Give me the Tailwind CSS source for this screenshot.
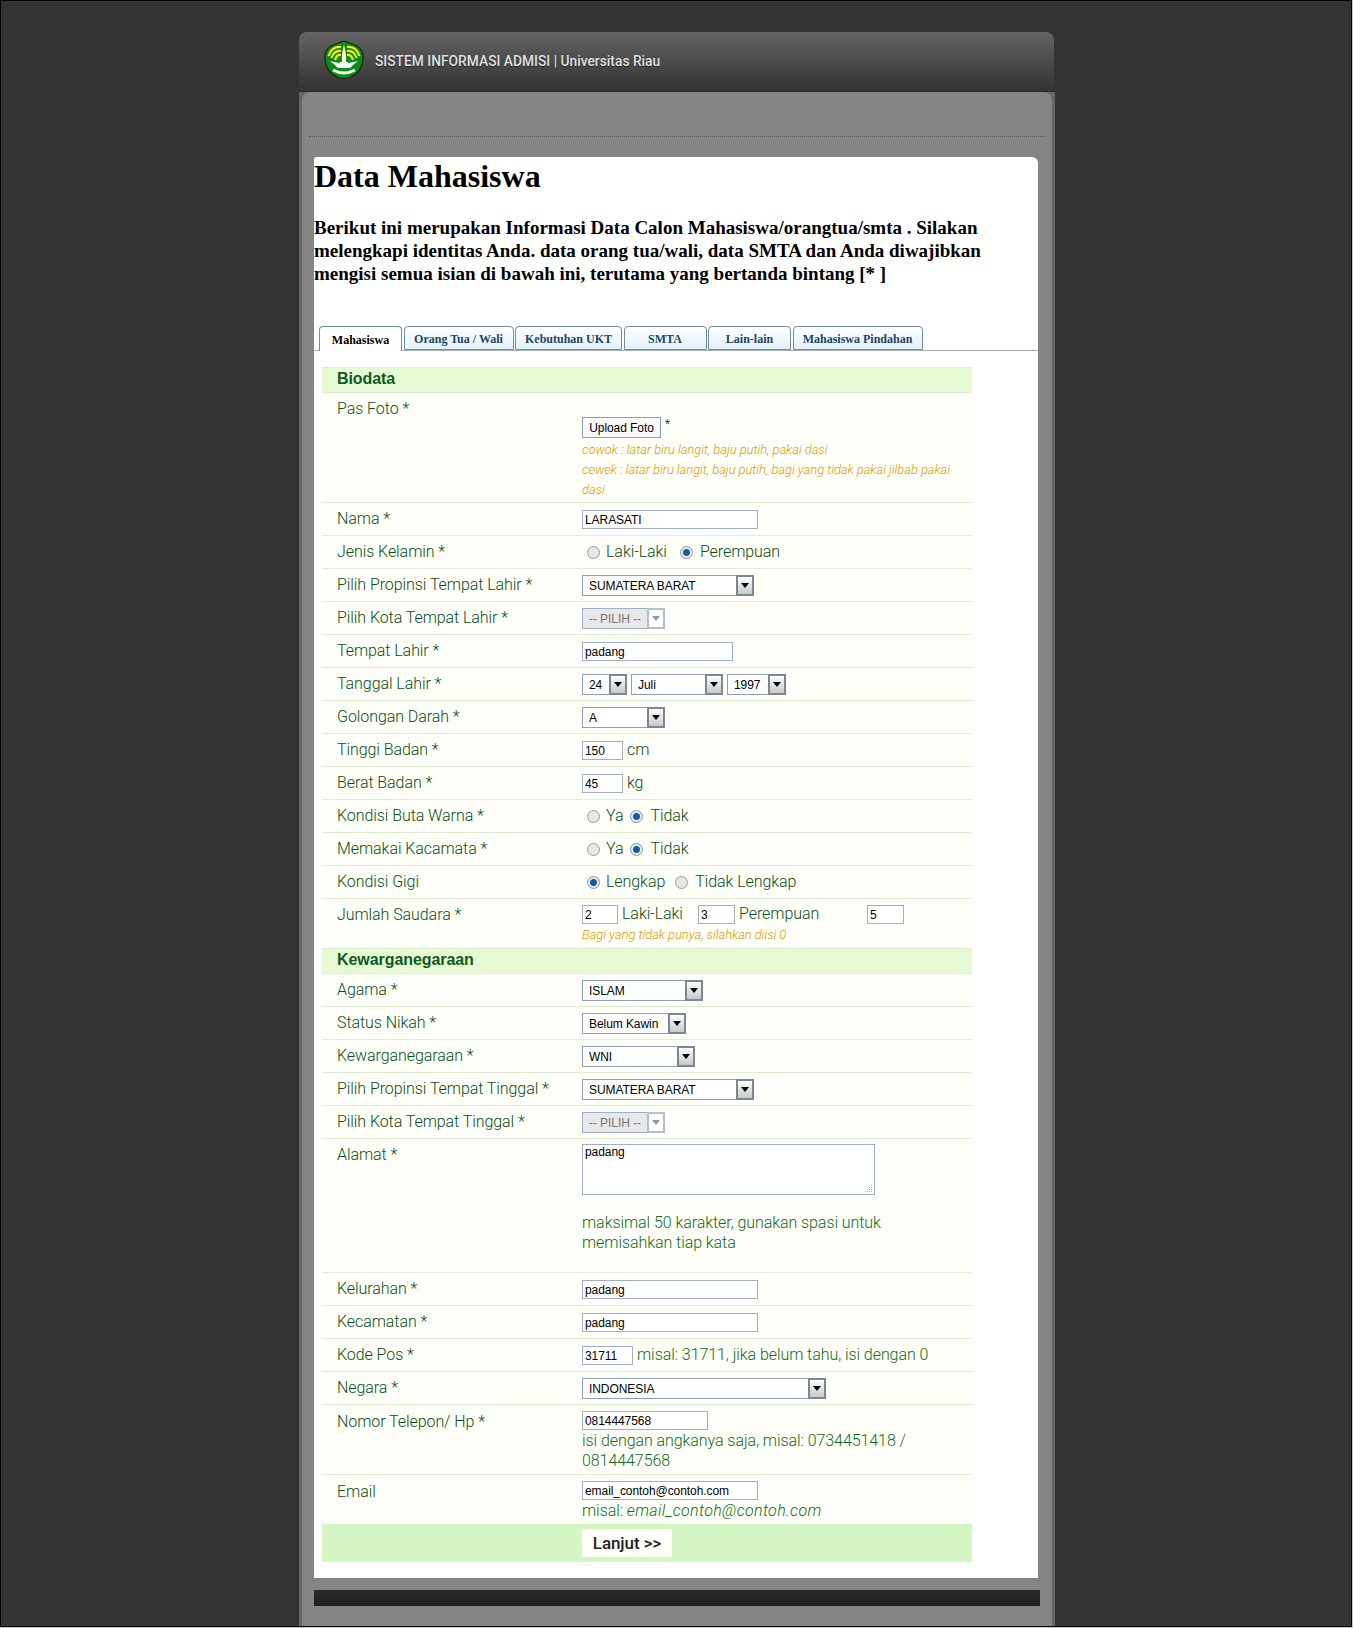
<!DOCTYPE html>
<html lang="en">
<head>
    <meta charset="UTF-8">
    <meta name="viewport" content="width=device-width, initial-scale=1.0">
    <title>Data Mahasiswa</title>
    <script src="https://cdn.jsdelivr.net/npm/@tailwindcss/browser@4"></script>
</head>
<body class="bg-[#c8c8c8]">
<div class="h-[1627px] w-[1352px] overflow-hidden border border-black bg-[#333333] font-['Roboto',sans-serif]">
    <div class="ml-[298px] w-[756px] pt-[31px]">
        <!-- header -->
        <div class="flex h-[60px] w-[755px] items-center rounded-t-[8px] border-b border-[#2c2c2c] bg-gradient-to-b from-[#646464] to-[#333333] pl-[25px]">
            <svg width="40" height="40" viewBox="0 0 40 40" class="mb-[3px] shrink-0">
                <path d="M20 1 L33 6 Q39 10 39 17 Q39 27 32 34 Q26 38 20 39 Q14 38 8 34 Q1 27 1 17 Q1 10 7 6 Z" fill="#0f8a1c" stroke="#10240f" stroke-width="1.2"/>
                <path d="M17 7 Q8 6 4.5 16 M17 11 Q10 10 7.5 18 M17 15 Q13 14 11 20" fill="none" stroke="#f4e81c" stroke-width="2.2"/>
                <path d="M23 7 Q32 6 35.5 16 M23 11 Q30 10 32.5 18 M23 15 Q27 14 29 20" fill="none" stroke="#f4e81c" stroke-width="2.2"/>
                <path d="M20 5 C21.5 10 22.5 16 22 22 L18 22 C17.500 16 18.500 10 20 5 Z" fill="#fdfbd0"/>
                <path d="M6 21 L15 23 L17 22 L23 22 L25 23 L34 21 L29 25 L26 28 L14 28 L11 25 Z" fill="#ffffff"/>
                <path d="M9 30 Q20 36 31 30" fill="none" stroke="#f0f8e8" stroke-width="3"/>
            </svg>
            <span class="ml-[11px] text-[13.8px] font-medium text-[#e0e0e0] [text-shadow:0_1px_1px_#222]">SISTEM INFORMASI ADMISI | Universitas Riau</span>
        </div>

        <!-- main column -->
        <div class="h-[1540px] bg-[#666666] px-[3px]">
            <div class="h-full rounded-t-[8px] bg-[#858585] pt-[44px]">
                <div class="mx-[7px] border-t border-dotted border-[#555555]"></div>
                <div class="mt-[20px] ml-[12px] w-[724px] rounded-tr-[6px] rounded-tl-[3px] bg-white pt-[1px] pb-[16px]">
                    <h1 class="font-['Liberation_Serif',serif] text-[32px] leading-[37px] font-bold text-black">Data Mahasiswa</h1>
                    <p class="mt-[21px] w-[700px] font-['Liberation_Serif',serif] text-[19px] leading-[23px] font-bold text-black">Berikut ini merupakan Informasi Data Calon Mahasiswa/orangtua/smta . Silakan melengkapi identitas Anda. data orang tua/wali, data SMTA dan Anda diwajibkan mengisi semua isian di bawah ini, terutama yang bertanda bintang [* ]</p>

                    <!-- tabs -->
                    <div class="mt-[41px] flex h-[25px] gap-[1.5px] border-b border-[#a5adb5] pl-[5px] font-['Liberation_Serif',serif] text-[12px] font-bold text-[#1d4568]">
                        <div class="flex h-[25px] w-[83px] items-center justify-center rounded-t-[4px] border border-b-0 border-[#6f8ca3] bg-white pt-[2px] text-black">Mahasiswa</div>
                        <div class="flex h-[24px] w-[110px] items-center justify-center rounded-t-[4px] border border-[#6f8ca3] bg-gradient-to-b from-white to-[#e3f1fa] pt-[1px]">Orang Tua / Wali</div>
                        <div class="flex h-[24px] w-[107px] items-center justify-center rounded-t-[4px] border border-[#6f8ca3] bg-gradient-to-b from-white to-[#e3f1fa] pt-[1px]">Kebutuhan UKT</div>
                        <div class="flex h-[24px] w-[83px] items-center justify-center rounded-t-[4px] border border-[#6f8ca3] bg-gradient-to-b from-white to-[#e3f1fa] pt-[1px]">SMTA</div>
                        <div class="flex h-[24px] w-[83px] items-center justify-center rounded-t-[4px] border border-[#6f8ca3] bg-gradient-to-b from-white to-[#e3f1fa] pt-[1px]">Lain-lain</div>
                        <div class="flex h-[24px] w-[130px] items-center justify-center rounded-t-[4px] border border-[#6f8ca3] bg-gradient-to-b from-white to-[#e3f1fa] pt-[1px]">Mahasiswa Pindahan</div>
                    </div>

                    <!-- form -->
                    <div class="mt-[16px] ml-[8px] w-[650px] text-[16px] leading-[20px] font-light tracking-[-0.07px] text-[#0c4d20]">
                        <div class="flex h-[26px] items-center border-y border-[#dcefd0] bg-[#e6fbd4] pb-[2px] pl-[15px] font-['Liberation_Sans',sans-serif] font-bold text-[#0f5a22]">Biodata</div>

                        <div class="flex h-[110px] border-b border-[#dfeed3] bg-[#fdfff8]">
                            <div class="w-[260px] shrink-0 pl-[15px] pt-[6px]">Pas Foto *</div>
                            <div class="pt-[24px]">
                                <div class="flex items-start">
                                    <button class="h-[21px] w-[79px] border border-[#8f9fb3] bg-[#f9f9f9] font-['Liberation_Sans',sans-serif] text-[12px] font-normal text-black">Upload Foto</button>
                                    <span class="ml-[4px] text-[12px] leading-[14px] text-black">*</span>
                                </div>
                                <p class="mt-[2px] w-[380px] text-[13px] leading-[20px] text-[#e09a00] italic">cowok : latar biru langit, baju putih, pakai dasi<br>cewek : latar biru langit, baju putih, bagi yang tidak pakai jilbab pakai dasi</p>
                            </div>
                        </div>

                        <div class="flex h-[33px] border-b border-[#dfeed3] bg-[#fdfff8]">
                            <div class="w-[260px] shrink-0 pl-[15px] pt-[6px]">Nama *</div>
                            <div class="pt-[7px]"><input type="text" value="LARASATI" class="block h-[19px] w-[176px] border border-[#9fb0c5] bg-white px-[2px] font-['Liberation_Sans',sans-serif] text-[12px] font-normal text-black"></div>
                        </div>

                        <div class="flex h-[33px] border-b border-[#dfeed3] bg-[#fdfff8]">
                            <div class="w-[260px] shrink-0 pl-[15px] pt-[6px]">Jenis Kelamin *</div>
                            <div class="flex items-center pl-[5px]">
                                <input type="radio" name="jk" class="h-[13px] w-[13px] appearance-none rounded-full border border-[#9a9a9a] bg-[#e6e6e6]"><span class="ml-[6px]">Laki-Laki</span>
                                <input type="radio" name="jk" checked class="ml-[13px] h-[13px] w-[13px] appearance-none rounded-full border border-[#8a94a0] bg-[radial-gradient(circle,#1a5a9c_0,#1a5a9c_3px,#e4e9ef_4px)]"><span class="ml-[7px]">Perempuan</span>
                            </div>
                        </div>

                        <div class="flex h-[33px] border-b border-[#dfeed3] bg-[#fdfff8]">
                            <div class="w-[260px] shrink-0 pl-[15px] pt-[6px]">Pilih Propinsi Tempat Lahir *</div>
                            <div class="pt-[6px]">
                                <span class="relative block h-[21px] w-[172px]"><select class="h-full w-full appearance-none border border-[#8f9fb3] bg-white pb-[4px] pl-[6px] font-['Liberation_Sans',sans-serif] text-[12px] font-normal text-black"><option>SUMATERA BARAT</option></select><span class="absolute top-0 right-0 flex h-[21px] w-[18px] items-center justify-center border-2 border-[#7c8794] bg-gradient-to-b from-white to-[#c9c9c9]"><span class="border-x-[4px] border-t-[5px] border-x-transparent border-t-black"></span></span></span>
                            </div>
                        </div>

                        <div class="flex h-[33px] border-b border-[#dfeed3] bg-[#fdfff8]">
                            <div class="w-[260px] shrink-0 pl-[15px] pt-[6px]">Pilih Kota Tempat Lahir *</div>
                            <div class="pt-[6px]">
                                <span class="relative block h-[21px] w-[83px]"><select disabled class="h-full w-full appearance-none border border-[#9fb0c5] bg-[#e8e8e8] pb-[4px] pl-[6px] font-['Liberation_Sans',sans-serif] text-[12px] font-normal text-[#777777]"><option>-- PILIH --</option></select><span class="absolute top-0 right-0 flex h-[21px] w-[18px] items-center justify-center border-2 border-[#b5bfca] bg-white"><span class="border-x-[4px] border-t-[5px] border-x-transparent border-t-[#999999]"></span></span></span>
                            </div>
                        </div>

                        <div class="flex h-[33px] border-b border-[#dfeed3] bg-[#fdfff8]">
                            <div class="w-[260px] shrink-0 pl-[15px] pt-[6px]">Tempat Lahir *</div>
                            <div class="pt-[7px]"><input type="text" value="padang" class="block h-[19px] w-[151px] border border-[#9fb0c5] bg-white px-[2px] font-['Liberation_Sans',sans-serif] text-[12px] font-normal text-black"></div>
                        </div>

                        <div class="flex h-[33px] border-b border-[#dfeed3] bg-[#fdfff8]">
                            <div class="w-[260px] shrink-0 pl-[15px] pt-[6px]">Tanggal Lahir *</div>
                            <div class="flex gap-[4px] pt-[6px]">
                                <span class="relative block h-[21px] w-[45px]"><select class="h-full w-full appearance-none border border-[#8f9fb3] bg-white pb-[4px] pl-[6px] font-['Liberation_Sans',sans-serif] text-[12px] font-normal text-black"><option>24</option></select><span class="absolute top-0 right-0 flex h-[21px] w-[18px] items-center justify-center border-2 border-[#7c8794] bg-gradient-to-b from-white to-[#c9c9c9]"><span class="border-x-[4px] border-t-[5px] border-x-transparent border-t-black"></span></span></span>
                                <span class="relative block h-[21px] w-[92px]"><select class="h-full w-full appearance-none border border-[#8f9fb3] bg-white pb-[4px] pl-[6px] font-['Liberation_Sans',sans-serif] text-[12px] font-normal text-black"><option>Juli</option></select><span class="absolute top-0 right-0 flex h-[21px] w-[18px] items-center justify-center border-2 border-[#7c8794] bg-gradient-to-b from-white to-[#c9c9c9]"><span class="border-x-[4px] border-t-[5px] border-x-transparent border-t-black"></span></span></span>
                                <span class="relative block h-[21px] w-[59px]"><select class="h-full w-full appearance-none border border-[#8f9fb3] bg-white pb-[4px] pl-[6px] font-['Liberation_Sans',sans-serif] text-[12px] font-normal text-black"><option>1997</option></select><span class="absolute top-0 right-0 flex h-[21px] w-[18px] items-center justify-center border-2 border-[#7c8794] bg-gradient-to-b from-white to-[#c9c9c9]"><span class="border-x-[4px] border-t-[5px] border-x-transparent border-t-black"></span></span></span>
                            </div>
                        </div>

                        <div class="flex h-[33px] border-b border-[#dfeed3] bg-[#fdfff8]">
                            <div class="w-[260px] shrink-0 pl-[15px] pt-[6px]">Golongan Darah *</div>
                            <div class="pt-[6px]">
                                <span class="relative block h-[21px] w-[83px]"><select class="h-full w-full appearance-none border border-[#8f9fb3] bg-white pb-[4px] pl-[6px] font-['Liberation_Sans',sans-serif] text-[12px] font-normal text-black"><option>A</option></select><span class="absolute top-0 right-0 flex h-[21px] w-[18px] items-center justify-center border-2 border-[#7c8794] bg-gradient-to-b from-white to-[#c9c9c9]"><span class="border-x-[4px] border-t-[5px] border-x-transparent border-t-black"></span></span></span>
                            </div>
                        </div>

                        <div class="flex h-[33px] border-b border-[#dfeed3] bg-[#fdfff8]">
                            <div class="w-[260px] shrink-0 pl-[15px] pt-[6px]">Tinggi Badan *</div>
                            <div class="flex items-start pt-[7px]"><input type="text" value="150" class="block h-[19px] w-[41px] border border-[#9fb0c5] bg-white px-[2px] font-['Liberation_Sans',sans-serif] text-[12px] font-normal text-black"><span class="ml-[4px] leading-[17px]">cm</span></div>
                        </div>

                        <div class="flex h-[33px] border-b border-[#dfeed3] bg-[#fdfff8]">
                            <div class="w-[260px] shrink-0 pl-[15px] pt-[6px]">Berat Badan *</div>
                            <div class="flex items-start pt-[7px]"><input type="text" value="45" class="block h-[19px] w-[41px] border border-[#9fb0c5] bg-white px-[2px] font-['Liberation_Sans',sans-serif] text-[12px] font-normal text-black"><span class="ml-[4px] leading-[17px]">kg</span></div>
                        </div>

                        <div class="flex h-[33px] border-b border-[#dfeed3] bg-[#fdfff8]">
                            <div class="w-[260px] shrink-0 pl-[15px] pt-[6px]">Kondisi Buta Warna *</div>
                            <div class="flex items-center pl-[5px]">
                                <input type="radio" name="bw" class="h-[13px] w-[13px] appearance-none rounded-full border border-[#9a9a9a] bg-[#e6e6e6]"><span class="ml-[6px]">Ya</span>
                                <input type="radio" name="bw" checked class="ml-[7px] h-[13px] w-[13px] appearance-none rounded-full border border-[#8a94a0] bg-[radial-gradient(circle,#1a5a9c_0,#1a5a9c_3px,#e4e9ef_4px)]"><span class="ml-[7px]">Tidak</span>
                            </div>
                        </div>

                        <div class="flex h-[33px] border-b border-[#dfeed3] bg-[#fdfff8]">
                            <div class="w-[260px] shrink-0 pl-[15px] pt-[6px]">Memakai Kacamata *</div>
                            <div class="flex items-center pl-[5px]">
                                <input type="radio" name="kc" class="h-[13px] w-[13px] appearance-none rounded-full border border-[#9a9a9a] bg-[#e6e6e6]"><span class="ml-[6px]">Ya</span>
                                <input type="radio" name="kc" checked class="ml-[7px] h-[13px] w-[13px] appearance-none rounded-full border border-[#8a94a0] bg-[radial-gradient(circle,#1a5a9c_0,#1a5a9c_3px,#e4e9ef_4px)]"><span class="ml-[7px]">Tidak</span>
                            </div>
                        </div>

                        <div class="flex h-[33px] border-b border-[#dfeed3] bg-[#fdfff8]">
                            <div class="w-[260px] shrink-0 pl-[15px] pt-[6px]">Kondisi Gigi</div>
                            <div class="flex items-center pl-[5px]">
                                <input type="radio" name="gg" checked class="h-[13px] w-[13px] appearance-none rounded-full border border-[#8a94a0] bg-[radial-gradient(circle,#1a5a9c_0,#1a5a9c_3px,#e4e9ef_4px)]"><span class="ml-[6px]">Lengkap</span>
                                <input type="radio" name="gg" class="ml-[10px] h-[13px] w-[13px] appearance-none rounded-full border border-[#9a9a9a] bg-[#e6e6e6]"><span class="ml-[7px]">Tidak Lengkap</span>
                            </div>
                        </div>

                        <div class="flex h-[49px] bg-[#fdfff8]">
                            <div class="w-[260px] shrink-0 pl-[15px] pt-[6px]">Jumlah Saudara *</div>
                            <div class="pt-[6px]">
                                <div class="flex items-start">
                                    <input type="text" value="2" class="block h-[19px] w-[36px] border border-[#9fb0c5] bg-white px-[2px] font-['Liberation_Sans',sans-serif] text-[12px] font-normal text-black"><span class="ml-[4px] w-[76px] leading-[17px]">Laki-Laki</span>
                                    <input type="text" value="3" class="block h-[19px] w-[37px] border border-[#9fb0c5] bg-white px-[2px] font-['Liberation_Sans',sans-serif] text-[12px] font-normal text-black"><span class="ml-[4px] w-[128px] leading-[17px]">Perempuan</span>
                                    <input type="text" value="5" class="block h-[19px] w-[37px] border border-[#9fb0c5] bg-white px-[2px] font-['Liberation_Sans',sans-serif] text-[12px] font-normal text-black">
                                </div>
                                <p class="mt-[1px] text-[13px] leading-[20px] text-[#e09a00] italic">Bagi yang tidak punya, silahkan diisi 0</p>
                            </div>
                        </div>

                        <div class="flex h-[26px] items-center border-y border-[#dcefd0] bg-[#e6fbd4] pb-[2px] pl-[15px] font-['Liberation_Sans',sans-serif] font-bold text-[#0f5a22]">Kewarganegaraan</div>

                        <div class="flex h-[33px] border-b border-[#dfeed3] bg-[#fdfff8]">
                            <div class="w-[260px] shrink-0 pl-[15px] pt-[6px]">Agama *</div>
                            <div class="pt-[6px]">
                                <span class="relative block h-[21px] w-[121px]"><select class="h-full w-full appearance-none border border-[#8f9fb3] bg-white pb-[4px] pl-[6px] font-['Liberation_Sans',sans-serif] text-[12px] font-normal text-black"><option>ISLAM</option></select><span class="absolute top-0 right-0 flex h-[21px] w-[18px] items-center justify-center border-2 border-[#7c8794] bg-gradient-to-b from-white to-[#c9c9c9]"><span class="border-x-[4px] border-t-[5px] border-x-transparent border-t-black"></span></span></span>
                            </div>
                        </div>

                        <div class="flex h-[33px] border-b border-[#dfeed3] bg-[#fdfff8]">
                            <div class="w-[260px] shrink-0 pl-[15px] pt-[6px]">Status Nikah *</div>
                            <div class="pt-[6px]">
                                <span class="relative block h-[21px] w-[104px]"><select class="h-full w-full appearance-none border border-[#8f9fb3] bg-white pb-[4px] pl-[6px] font-['Liberation_Sans',sans-serif] text-[12px] font-normal text-black"><option>Belum Kawin</option></select><span class="absolute top-0 right-0 flex h-[21px] w-[18px] items-center justify-center border-2 border-[#7c8794] bg-gradient-to-b from-white to-[#c9c9c9]"><span class="border-x-[4px] border-t-[5px] border-x-transparent border-t-black"></span></span></span>
                            </div>
                        </div>

                        <div class="flex h-[33px] border-b border-[#dfeed3] bg-[#fdfff8]">
                            <div class="w-[260px] shrink-0 pl-[15px] pt-[6px]">Kewarganegaraan *</div>
                            <div class="pt-[6px]">
                                <span class="relative block h-[21px] w-[113px]"><select class="h-full w-full appearance-none border border-[#8f9fb3] bg-white pb-[4px] pl-[6px] font-['Liberation_Sans',sans-serif] text-[12px] font-normal text-black"><option>WNI</option></select><span class="absolute top-0 right-0 flex h-[21px] w-[18px] items-center justify-center border-2 border-[#7c8794] bg-gradient-to-b from-white to-[#c9c9c9]"><span class="border-x-[4px] border-t-[5px] border-x-transparent border-t-black"></span></span></span>
                            </div>
                        </div>

                        <div class="flex h-[33px] border-b border-[#dfeed3] bg-[#fdfff8]">
                            <div class="w-[260px] shrink-0 pl-[15px] pt-[6px]">Pilih Propinsi Tempat Tinggal *</div>
                            <div class="pt-[6px]">
                                <span class="relative block h-[21px] w-[172px]"><select class="h-full w-full appearance-none border border-[#8f9fb3] bg-white pb-[4px] pl-[6px] font-['Liberation_Sans',sans-serif] text-[12px] font-normal text-black"><option>SUMATERA BARAT</option></select><span class="absolute top-0 right-0 flex h-[21px] w-[18px] items-center justify-center border-2 border-[#7c8794] bg-gradient-to-b from-white to-[#c9c9c9]"><span class="border-x-[4px] border-t-[5px] border-x-transparent border-t-black"></span></span></span>
                            </div>
                        </div>

                        <div class="flex h-[33px] border-b border-[#dfeed3] bg-[#fdfff8]">
                            <div class="w-[260px] shrink-0 pl-[15px] pt-[6px]">Pilih Kota Tempat Tinggal *</div>
                            <div class="pt-[6px]">
                                <span class="relative block h-[21px] w-[83px]"><select disabled class="h-full w-full appearance-none border border-[#9fb0c5] bg-[#e8e8e8] pb-[4px] pl-[6px] font-['Liberation_Sans',sans-serif] text-[12px] font-normal text-[#777777]"><option>-- PILIH --</option></select><span class="absolute top-0 right-0 flex h-[21px] w-[18px] items-center justify-center border-2 border-[#b5bfca] bg-white"><span class="border-x-[4px] border-t-[5px] border-x-transparent border-t-[#999999]"></span></span></span>
                            </div>
                        </div>

                        <div class="flex h-[134px] border-b border-[#dfeed3] bg-[#fdfff8]">
                            <div class="w-[260px] shrink-0 pl-[15px] pt-[6px]">Alamat *</div>
                            <div class="pt-[5px]">
                                <span class="relative block h-[51px] w-[293px]">
                                    <textarea class="block h-full w-full resize-none border border-[#9fb0c5] bg-white px-[2px] font-['Liberation_Sans',sans-serif] text-[12px] leading-[14px] font-normal text-black">padang</textarea>
                                    <svg width="8" height="8" viewBox="0 0 8 8" class="absolute right-[2px] bottom-[2px]"><path d="M6 0h1v1H6zM4 2h1v1H4zM6 2h1v1H6zM2 4h1v1H2zM4 4h1v1H4zM6 4h1v1H6zM0 6h1v1H0zM2 6h1v1H2zM4 6h1v1H4zM6 6h1v1H6z" fill="#b0b8b0"/></svg>
                                </span>
                                <p class="mt-[18px] w-[320px] text-[#146a1a]">maksimal 50 karakter, gunakan spasi untuk memisahkan tiap kata</p>
                            </div>
                        </div>

                        <div class="flex h-[33px] border-b border-[#dfeed3] bg-[#fdfff8]">
                            <div class="w-[260px] shrink-0 pl-[15px] pt-[6px]">Kelurahan *</div>
                            <div class="pt-[7px]"><input type="text" value="padang" class="block h-[19px] w-[176px] border border-[#9fb0c5] bg-white px-[2px] font-['Liberation_Sans',sans-serif] text-[12px] font-normal text-black"></div>
                        </div>

                        <div class="flex h-[33px] border-b border-[#dfeed3] bg-[#fdfff8]">
                            <div class="w-[260px] shrink-0 pl-[15px] pt-[6px]">Kecamatan *</div>
                            <div class="pt-[7px]"><input type="text" value="padang" class="block h-[19px] w-[176px] border border-[#9fb0c5] bg-white px-[2px] font-['Liberation_Sans',sans-serif] text-[12px] font-normal text-black"></div>
                        </div>

                        <div class="flex h-[33px] border-b border-[#dfeed3] bg-[#fdfff8]">
                            <div class="w-[260px] shrink-0 pl-[15px] pt-[6px]">Kode Pos *</div>
                            <div class="flex items-start pt-[7px]"><input type="text" value="31711" class="block h-[19px] w-[51px] border border-[#9fb0c5] bg-white px-[2px] font-['Liberation_Sans',sans-serif] text-[12px] font-normal text-black"><span class="ml-[4px] leading-[17px] text-[#146a1a]">misal: 31711, jika belum tahu, isi dengan 0</span></div>
                        </div>

                        <div class="flex h-[33px] border-b border-[#dfeed3] bg-[#fdfff8]">
                            <div class="w-[260px] shrink-0 pl-[15px] pt-[6px]">Negara *</div>
                            <div class="pt-[6px]">
                                <span class="relative block h-[21px] w-[244px]"><select class="h-full w-full appearance-none border border-[#8f9fb3] bg-white pb-[4px] pl-[6px] font-['Liberation_Sans',sans-serif] text-[12px] font-normal text-black"><option>INDONESIA</option></select><span class="absolute top-0 right-0 flex h-[21px] w-[18px] items-center justify-center border-2 border-[#7c8794] bg-gradient-to-b from-white to-[#c9c9c9]"><span class="border-x-[4px] border-t-[5px] border-x-transparent border-t-black"></span></span></span>
                            </div>
                        </div>

                        <div class="flex h-[70px] border-b border-[#dfeed3] bg-[#fdfff8]">
                            <div class="w-[260px] shrink-0 pl-[15px] pt-[7px]">Nomor Telepon/ Hp *</div>
                            <div class="pt-[6px]">
                                <input type="text" value="0814447568" class="block h-[19px] w-[126px] border border-[#9fb0c5] bg-white px-[2px] font-['Liberation_Sans',sans-serif] text-[12px] font-normal text-black">
                                <p class="mt-[1px] w-[340px] text-[#146a1a]">isi dengan angkanya saja, misal: 0734451418 / 0814447568</p>
                            </div>
                        </div>

                        <div class="flex h-[49px] bg-[#fdfff8]">
                            <div class="w-[260px] shrink-0 pl-[15px] pt-[7px]">Email</div>
                            <div class="pt-[6px]">
                                <input type="text" value="email_contoh@contoh.com" class="block h-[19px] w-[176px] border border-[#9fb0c5] bg-white px-[2px] font-['Liberation_Sans',sans-serif] text-[12px] font-normal text-black">
                                <p class="mt-[1px] text-[#146a1a]">misal: <em class="tracking-[0.35px]">email_contoh@contoh.com</em></p>
                            </div>
                        </div>

                        <div class="flex h-[38px] items-center bg-[#d5f6c3] pl-[260px]">
                            <button class="h-[28px] w-[90px] bg-[#fdfff8] text-[17px] font-medium text-[#222222]">Lanjut &gt;&gt;</button>
                        </div>
                    </div>
                </div>

                <!-- footer -->
                <div class="mt-[12px] ml-[12px] h-[16px] w-[726px] bg-gradient-to-b from-[#2b2b2b] to-[#1e1e1e]"></div>
            </div>
        </div>
    </div>
</div>
</body>
</html>
